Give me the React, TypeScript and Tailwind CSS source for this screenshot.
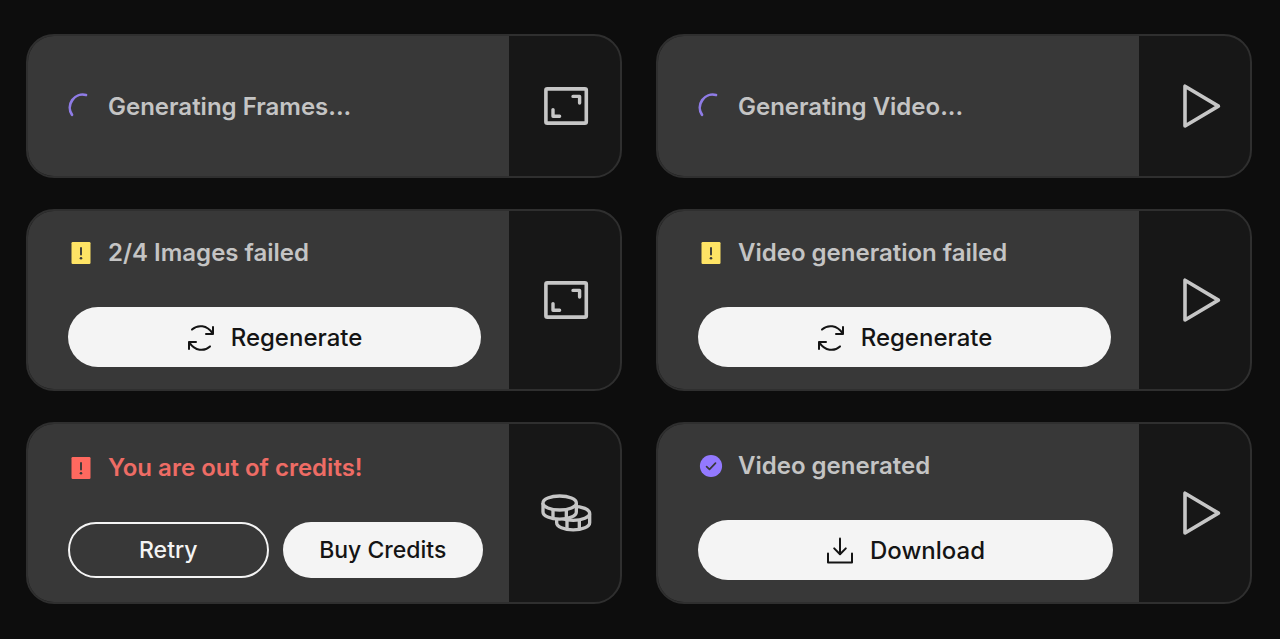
import type { ReactNode } from 'react';

const SpinnerIcon = () => (
  <svg width="26" height="32" viewBox="0 0 26 32" fill="none" className="overflow-visible" aria-hidden="true">
    <path d="M18 4A13 13 0 0 0 4 23.800" stroke="#8f7ce6" strokeWidth="2.7" strokeLinecap="round" />
  </svg>
);

const AlertIcon = ({ color }: { color: string }) => (
  <svg width="26" height="32" viewBox="0 0 26 32" aria-hidden="true">
    <rect x="3.5" y="5" width="19" height="22" rx="1.2" fill={color} />
    <path d="M13 11v6.6" stroke="#383838" strokeWidth="1.9" strokeLinecap="round" />
    <circle cx="13" cy="21.2" r="1.3" fill="#383838" />
  </svg>
);

const DoneIcon = () => (
  <svg width="26" height="32" viewBox="0 0 26 32" fill="none" aria-hidden="true">
    <circle cx="13" cy="16" r="11.1" fill="#9379ff" />
    <path d="M8.6 16.6l2.9 2.8 6-6.2" stroke="#383838" strokeWidth="1.7" strokeLinecap="round" strokeLinejoin="round" />
  </svg>
);

const RefreshIcon = () => (
  <svg width="28" height="28" viewBox="0 0 28 28" fill="none" stroke="#141414" strokeWidth="2" strokeLinecap="round" strokeLinejoin="round" aria-hidden="true">
    <path d="M5 5.6C10.8.2 20 1 25.6 9.4" />
    <path d="M26 3v7h-7" />
    <path d="M23 22.4C17.2 27.8 8 27 2.4 18.6" />
    <path d="M2 25v-7h7" />
  </svg>
);

const DownloadIcon = () => (
  <svg width="28" height="28" viewBox="0 0 28 28" fill="none" stroke="#141414" strokeWidth="2" strokeLinecap="round" strokeLinejoin="round" aria-hidden="true">
    <path d="M14 1.5v15.6" />
    <path d="M8.2 11.4l5.8 5.8 5.8-5.8" />
    <path d="M2 16.5v9h24v-9" />
  </svg>
);

const FramesIcon = () => (
  <svg width="46" height="40" viewBox="0 0 46 40" fill="none" stroke="#c6c6c6" strokeLinejoin="round" strokeLinecap="round" aria-hidden="true">
    <rect x="2.9" y="2.9" width="40.4" height="34.2" rx="1.4" strokeWidth="3.6" />
    <path d="M30 10.4h6.6v6.6" strokeWidth="3.4" />
    <path d="M10 23.600v6.600h6.600" strokeWidth="3.4" />
  </svg>
);

const PlayIcon = () => (
  <svg width="54" height="54" viewBox="0 0 54 54" fill="none" aria-hidden="true">
    <path d="M16 7.200v39.800L49.400 27.100z" stroke="#c6c6c6" strokeWidth="3.6" strokeLinejoin="round" />
  </svg>
);

const CoinsIcon = () => (
  <svg width="52" height="40" viewBox="30 40 156 120" fill="#171717" stroke="#c6c6c6" strokeWidth="10" aria-hidden="true">
    <path d="M80 102v27c0 12 22 21.5 49.5 21.5S179 141 179 129v-27" />
    <ellipse cx="129.5" cy="101" rx="49.5" ry="21" />
    <path d="M111 121v26M148 121v26" />
    <path d="M39 70v27c0 12 22 21.5 50 21.5S139 109 139 97V70" />
    <ellipse cx="89" cy="70" rx="50" ry="21" />
    <path d="M69 90v26M109 90v26" />
  </svg>
);

interface CardProps {
  icon: ReactNode;
  title: string;
  titleClass?: string;
  bodyClass: string;
  side: ReactNode;
  children?: ReactNode;
}

function Card({ icon, title, titleClass = 'text-[#c4c4c4]', bodyClass, side, children }: CardProps) {
  return (
    <section className="flex overflow-hidden rounded-[28px] border-2 border-[#2f2f2f] bg-[#171717]">
      <div className={`flex min-w-0 flex-1 flex-col bg-[#383838] pl-10 ${bodyClass}`}>
        <div className="flex items-center gap-[14px]">
          {icon}
          <h2 className={`text-2xl font-semibold whitespace-nowrap ${titleClass}`}>{title}</h2>
        </div>
        {children}
      </div>
      <div className="flex w-[111px] shrink-0 items-center justify-center pl-0.5">{side}</div>
    </section>
  );
}

function WideButton({ icon, label }: { icon: ReactNode; label: string }) {
  return (
    <button type="button" className="flex h-[60px] items-center justify-center gap-4 rounded-full bg-[#f4f4f4] pt-0.5 text-2xl font-medium text-[#141414]">
      {icon}
      {label}
    </button>
  );
}

export default function App() {
  return (
    <main className="min-h-screen bg-[#0d0d0d] pt-[34px] pr-7 pb-[35px] pl-[26px] font-['Inter',sans-serif]">
      <div className="grid grid-cols-2 gap-x-[34px] gap-y-[31px]">
        <Card icon={<SpinnerIcon />} title="Generating Frames..." bodyClass="justify-center pt-[55px] pr-7 pb-[53px]" side={<FramesIcon />} />
        <Card icon={<SpinnerIcon />} title="Generating Video..." bodyClass="justify-center pt-[55px] pr-7 pb-[53px]" side={<PlayIcon />} />

        <Card icon={<AlertIcon color="#ffe465" />} title="2/4 Images failed" bodyClass="gap-[38px] pt-[26px] pr-7 pb-[22px]" side={<FramesIcon />}>
          <WideButton icon={<RefreshIcon />} label="Regenerate" />
        </Card>
        <Card icon={<AlertIcon color="#ffe465" />} title="Video generation failed" bodyClass="gap-[38px] pt-[26px] pr-7 pb-[22px]" side={<PlayIcon />}>
          <WideButton icon={<RefreshIcon />} label="Regenerate" />
        </Card>

        <Card
          icon={<AlertIcon color="#ff695f" />}
          title="You are out of credits!"
          titleClass="text-[#ee6c65]"
          bodyClass="gap-[38px] pt-7 pr-[26px] pb-6"
          side={<CoinsIcon />}
        >
          <div className="grid grid-cols-2 gap-[14px]">
            <button type="button" className="h-14 rounded-full border-2 border-[#f4f4f4] text-[23px] font-medium text-[#f4f4f4]">
              Retry
            </button>
            <button type="button" className="h-14 rounded-full bg-[#f4f4f4] text-[23px] font-medium text-[#141414]">
              Buy Credits
            </button>
          </div>
        </Card>
        <Card icon={<DoneIcon />} title="Video generated" bodyClass="gap-[38px] pt-[26px] pr-[26px] pb-[22px]" side={<PlayIcon />}>
          <WideButton icon={<DownloadIcon />} label="Download" />
        </Card>
      </div>
    </main>
  );
}
